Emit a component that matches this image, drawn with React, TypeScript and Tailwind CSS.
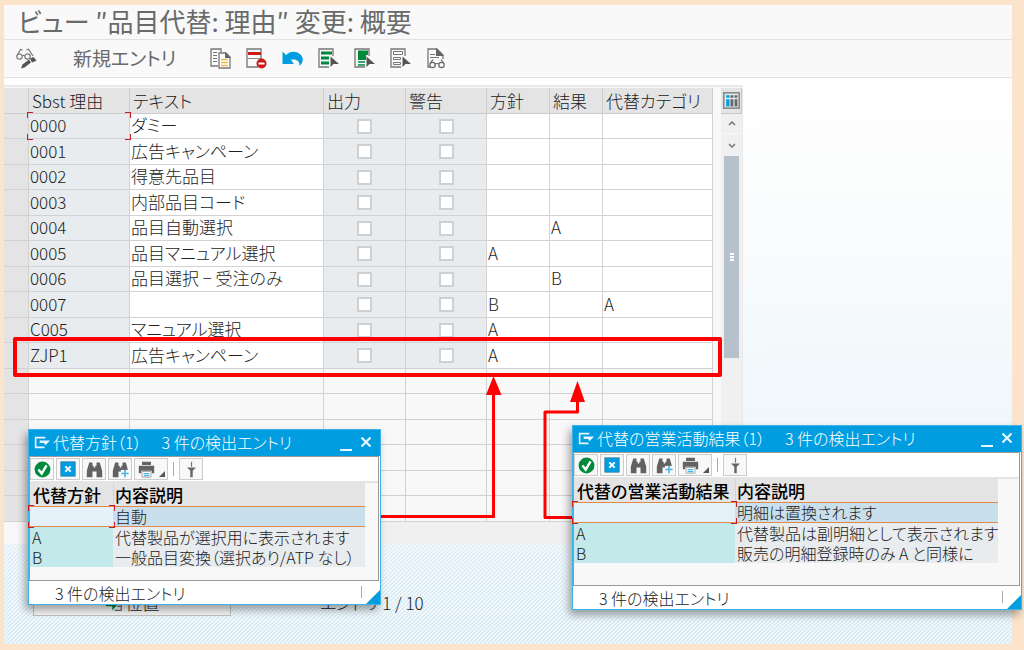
import React from 'react';

type EntryRow = {
  code: string;
  text: string;
  strategy?: string;
  result?: string;
  category?: string;
};

type HitRow = [string, string];

const entries: EntryRow[] = [
  { code: '0000', text: 'ダミー' },
  { code: '0001', text: '広告キャンペーン' },
  { code: '0002', text: '得意先品目' },
  { code: '0003', text: '内部品目コード' },
  { code: '0004', text: '品目自動選択', result: 'A' },
  { code: '0005', text: '品目マニュアル選択', strategy: 'A' },
  { code: '0006', text: '品目選択 − 受注のみ', result: 'B' },
  { code: '0007', text: '', strategy: 'B', category: 'A' },
  { code: 'C005', text: 'マニュアル選択', strategy: 'A' },
  { code: 'ZJP1', text: '広告キャンペーン', strategy: 'A' },
];

const emptyRows = [0, 1, 2, 3, 4, 5];

const strategyHits: HitRow[] = [
  ['', '自動'],
  ['A', '代替製品が選択用に表示されます'],
  ['B', '一般品目変換（選択あり/ATP なし）'],
];

const resultHits: HitRow[] = [
  ['', '明細は置換されます'],
  ['A', '代替製品は副明細として表示されます'],
  ['B', '販売の明細登録時のみ A と同様に'],
];

const Svg: React.FunctionComponent<{ children: React.ReactNode; className?: string }> = ({
  children,
  className = 'h-[21px] w-[21px]',
}) => (
  <svg viewBox="0 0 21 21" fill="none" className={className} aria-hidden="true">
    {children}
  </svg>
);

const DisplayChangeIcon = () => (
  <Svg>
    <g stroke="#777" strokeWidth="1.2">
      <circle cx="3.5" cy="8.5" r="2.7" />
      <circle cx="11.5" cy="8.5" r="2.7" />
      <path d="M6.300 7.800q1.200-1 2.400 0M1 7.500 4.500 1.500l2 .6M10.500 2l2-.8L17 8" />
    </g>
    <path d="M5 20.500l1.500-4L13 11.500l2 3L8.500 19.500z" fill="#555" />
    <path d="M14 10.500l3.500-1.500 3 3.500-3 1.500-1.500.500z" fill="#555" />
  </Svg>
);

const CopyIcon = () => (
  <Svg>
    <path d="M8 18H1V1h10v3" stroke="#777" strokeWidth="1.300" />
    <path d="M3 4.500h4M3 7.500h4M3 10.500h4M3 13.500h4" stroke="#777" />
    <path d="M9 5h7l4 4v11H9z" fill="#fff" stroke="#777" strokeWidth="1.300" />
    <path d="M15 4v6h6z" fill="#666" />
    <path d="M11 11.500h7M11 14.500h7M11 17.500h7" stroke="#f0b840" strokeWidth="1.600" />
  </Svg>
);

const DeleteIcon = () => (
  <Svg>
    <path d="M15 11V1H1v18h11" stroke="#777" strokeWidth="1.300" />
    <path d="M1 10.500h14" stroke="#888" />
    <path d="M2 5.500h13" stroke="#cc1919" strokeWidth="3" />
    <circle cx="15.500" cy="15.500" r="5" fill="#cc1919" />
    <path d="M12.500 15.500h6" stroke="#fff" strokeWidth="2" />
  </Svg>
);

const UndoIcon = () => (
  <Svg>
    <path
      d="M.5 3.500L4 7C8 2.500 15 2.500 19 7c3 4 2 7.500-1.500 11 .500-4.500-3-7.500-8.500-6l3 4H.5z"
      fill="#009de0"
    />
  </Svg>
);

const Cursor = () => <path d="M12.500 8.500v10.500l3-3h5.500z" fill="#555" />;

const SelectAllIcon = () => (
  <Svg>
    <path d="M15 8V1H1v18h10" stroke="#777" strokeWidth="1.300" />
    <path d="M3 5h11M3 10h8M3 15h8" stroke="#00883a" strokeWidth="3" />
    <Cursor />
  </Svg>
);

const SelectBlockIcon = () => (
  <Svg>
    <path d="M15 8V1H1v18h10" stroke="#777" strokeWidth="1.300" />
    <path d="M4 2.500h10V7h-2v5H4z" fill="#00883a" />
    <path d="M4 14h7M4 17h7" stroke="#00883a" strokeWidth="1.300" />
    <Cursor />
  </Svg>
);

const DeselectIcon = () => (
  <Svg>
    <path d="M15 8V1H1v18h10" stroke="#777" strokeWidth="1.300" />
    <path d="M3.500 3.500h9v3h-9zM3.500 9.500h7v2h-7zM3.500 14.500h7v2h-7z" stroke="#777" />
    <Cursor />
  </Svg>
);

const DetailIcon = () => (
  <Svg>
    <path d="M4 19H2V1h9l6 6v4" stroke="#777" strokeWidth="1.300" />
    <path d="M10 0v8h8z" fill="#666" />
    <path d="M4 6.500h5M4 9.500h9" stroke="#777" />
    <g stroke="#666" strokeWidth="1.200">
      <circle cx="6.500" cy="17" r="2.700" />
      <circle cx="15.500" cy="17" r="2.700" />
      <path d="M9 16q2-1 4 0M4.500 15l2.500-3.500M17.500 15 15 11.500" />
    </g>
  </Svg>
);

const ColumnsIcon = () => (
  <Svg className="h-[17px] w-[17px]">
    <rect x="1" y="1" width="19" height="19" fill="#dfe9f0" stroke="#8a8a8a" strokeWidth="2" />
    <path d="M6 4v3M6 9v9" stroke="#009de0" strokeWidth="4" />
    <path d="M11 4v3M11 9v9M16 4v3M16 9v9" stroke="#666" strokeWidth="3.500" />
  </Svg>
);

const CheckIcon = () => (
  <Svg className="h-[17px] w-[17px]">
    <circle cx="10.500" cy="10.500" r="9.800" fill="#008a3b" />
    <path d="M5.500 10.500l4 5 6-10" stroke="#fff" strokeWidth="3" />
  </Svg>
);

const CancelIcon = () => (
  <Svg className="h-4 w-4">
    <path d="M1 1h19v19H1z" fill="#009de0" stroke="#3a7fa3" />
    <path d="M7 7l7 7M14 7l-7 7" stroke="#fff" strokeWidth="2.600" />
  </Svg>
);

const Binoculars = () => (
  <path d="M4 2h4v4h1.500v2h2V6H13V2h4l3 10v8h-7v-7H8v7H1v-8z" fill="#626262" />
);

const FindIcon = () => (
  <Svg className="h-[17px] w-[17px]">
    <Binoculars />
  </Svg>
);

const FindNextIcon = () => (
  <Svg className="h-[17px] w-[17px]">
    <Binoculars />
    <path d="M11 11h10v10H11z" fill="#f8f8f8" />
    <path d="M16 11v9M11.500 15.500h9" stroke="#46b4e6" strokeWidth="2" />
  </Svg>
);

const PrintIcon = () => (
  <Svg className="h-[17px] w-[17px]">
    <path d="M5 1h11v4H5zM1 6h19v9h-3v-3H4v3H1z" fill="#626262" />
    <path d="M5 13h11v7H5z" fill="#fff" stroke="#999" />
    <path d="M7 15.500h7M7 18h7" stroke="#46b4e6" strokeWidth="1.500" />
  </Svg>
);

const FilterIcon = () => (
  <Svg className="h-[17px] w-[17px]">
    <path d="M10.500 1v6" stroke="#777" strokeWidth="1.500" />
    <path d="M5 8h11l-4 4v8H9v-8z" fill="#666" />
  </Svg>
);

const ExitIcon = () => (
  <Svg className="h-[17px] w-[17px]">
    <path d="M14 4.500H2v12h11" stroke="#e8f6fd" strokeWidth="2" />
    <path d="M7 8h13l-6 6-1.500-3H7z" fill="#e8f6fd" />
  </Svg>
);

const PositionIcon = () => (
  <Svg className="h-[17px] w-[17px]">
    <path d="M1 10h8V5l6 7-6 7v-5H1z" fill="#00883a" />
    <path d="M13 2h7v17h-8M15 6h4M16 10h3M15 14h4" stroke="#666" strokeWidth="1.500" />
  </Svg>
);

const tools = [
  { label: 'コピー', Icon: CopyIcon },
  { label: '削除', Icon: DeleteIcon },
  { label: '元に戻す', Icon: UndoIcon },
  { label: '全選択', Icon: SelectAllIcon },
  { label: 'ブロック選択', Icon: SelectBlockIcon },
  { label: '全選択解除', Icon: DeselectIcon },
  { label: '詳細', Icon: DetailIcon },
];

// Red corner marks around the focused cell
const FocusCorners = () => (
  <span className="pointer-events-none absolute -inset-x-0.5 -inset-y-0.5 z-10">
    <span className="absolute left-0 top-0 h-1.5 w-1.5 border-l border-t border-[#c02020]" />
    <span className="absolute right-0 top-0 h-1.5 w-1.5 border-r border-t border-[#c02020]" />
    <span className="absolute bottom-0 left-0 h-1.5 w-1.5 border-b border-l border-[#c02020]" />
    <span className="absolute bottom-0 right-0 h-1.5 w-1.5 border-b border-r border-[#c02020]" />
  </span>
);

const HeadCell: React.FunctionComponent<{ children?: React.ReactNode }> = ({ children }) => (
  <th className="border-b border-r border-[#cdcdcd] bg-[#e4e4e4] p-0 pl-[3px] text-left font-light text-[#222]">
    {children}
  </th>
);

const cell = 'relative border-b border-r border-[#d2d2d2] p-0 pb-0.5 pl-px ';

const FlagCell: React.FunctionComponent<{ label: string }> = ({ label }) => (
  <td className="border-b border-r border-[#d2d2d2] bg-[#e8ecef] p-0">
    <input
      type="checkbox"
      disabled
      aria-label={label}
      className="mx-auto block h-[15px] w-[15px] appearance-none border-2 border-[#d0d0d0] bg-white"
    />
  </td>
);

const EntryTable = () => (
  <table className="w-[709px] table-fixed border-separate border-spacing-0 whitespace-nowrap text-[17px] leading-5 text-[#222]">
    <colgroup>
      <col className="w-[25px]" />
      <col className="w-[101px]" />
      <col className="w-[194px]" />
      <col className="w-[82px]" />
      <col className="w-[81px]" />
      <col className="w-[63px]" />
      <col className="w-[53px]" />
      <col className="w-[110px]" />
    </colgroup>
    <thead>
      <tr className="h-[26px]">
        <HeadCell />
        <HeadCell>Sbst 理由</HeadCell>
        <HeadCell>テキスト</HeadCell>
        <HeadCell>出力</HeadCell>
        <HeadCell>警告</HeadCell>
        <HeadCell>方針</HeadCell>
        <HeadCell>結果</HeadCell>
        <HeadCell>代替カテゴリ</HeadCell>
      </tr>
    </thead>
    <tbody>
      {entries.map((e, i) => (
        <tr key={e.code} className="h-[25px] even:h-[26px]">
          <td className={cell + 'bg-[#e4e4e4]'} />
          <td className={cell + 'bg-[#e8ecef]'}>
            {e.code}
            {i === 0 && <FocusCorners />}
          </td>
          <td className={cell + 'bg-white'}>{e.text}</td>
          <FlagCell label={`出力 ${e.code}`} />
          <FlagCell label={`警告 ${e.code}`} />
          <td className={cell + 'bg-white'}>{e.strategy}</td>
          <td className={cell + 'bg-white'}>{e.result}</td>
          <td className={cell + 'bg-white'}>{e.category}</td>
        </tr>
      ))}
      {emptyRows.map(r => (
        <tr key={r} className="h-[25px] even:h-[26px]">
          <td className={cell + 'bg-[#e4e4e4]'} />
          <td className={cell} />
          <td className={cell} />
          <td className={cell} />
          <td className={cell} />
          <td className={cell} />
          <td className={cell} />
          <td className={cell} />
        </tr>
      ))}
    </tbody>
  </table>
);

const ScrollColumn = () => (
  <div className="flex w-[21px] flex-col items-center bg-[#f0f0f0]">
    <button
      type="button"
      aria-label="表の設定"
      className="flex h-[26px] w-full items-center justify-center border-b border-r border-[#c8c8c8] bg-[#e4e4e4]"
    >
      <ColumnsIcon />
    </button>
    <button type="button" aria-label="上へ" className="flex h-5 w-full items-center justify-center border-b border-[#f8f8f8]">
      <svg viewBox="0 0 8 5" fill="none" className="h-[5px] w-2">
        <path d="M1 4l3-3 3 3" stroke="#777" strokeWidth="1.500" />
      </svg>
    </button>
    <button type="button" aria-label="下へ" className="flex h-[22px] w-full items-center justify-center">
      <svg viewBox="0 0 8 5" fill="none" className="h-[5px] w-2">
        <path d="M1 1l3 3 3-3" stroke="#777" strokeWidth="1.500" />
      </svg>
    </button>
    <div className="flex h-[202px] w-[15px] flex-col items-center justify-center gap-px bg-[#b7c1cb]">
      <span className="h-0.5 w-1 bg-white" />
      <span className="h-0.5 w-1 bg-white" />
      <span className="h-0.5 w-1 bg-white" />
    </div>
  </div>
);

const ToolButton: React.FunctionComponent<{ label: string; children: React.ReactNode }> = ({
  label,
  children,
}) => (
  <button
    type="button"
    aria-label={label}
    className="flex h-[22px] w-6 items-center justify-center border border-[#cccccc] bg-[#f8f8f8]"
  >
    {children}
  </button>
);

type HitListProps = {
  title: string;
  keyHeader: string;
  keyColumn: string;
  tableWidth: string;
  bodyHeight: string;
  className: string;
  rows: HitRow[];
};

const HitListWindow: React.FunctionComponent<HitListProps> = ({
  title,
  keyHeader,
  keyColumn,
  tableWidth,
  bodyHeight,
  className,
  rows,
}) => (
  <section
    aria-label={title}
    className={
      'absolute whitespace-nowrap border border-[#3fb3e8] bg-white text-[16px] text-[#222] shadow-[-3px_5px_8px_rgba(0,0,0,0.35)] ' +
      className
    }
  >
    <header className="flex h-[26px] items-center bg-[#009de0] pb-0.5 pl-[5px] pr-2 text-white">
      <ExitIcon />
      <h2 className="ml-0.5 flex-1 leading-6">
        {title}
        <span className="ml-5">3 件の検出エントリ</span>
      </h2>
      <button type="button" aria-label="最小化" className="mr-2 h-[18px] w-3 border-b-2 border-[#e8f6fd]" />
      <button type="button" aria-label="閉じる">
        <svg viewBox="0 0 12 12" className="h-3 w-3">
          <path d="M1.500 1.500l9 9M10.500 1.500l-9 9" stroke="#e8f6fd" strokeWidth="2.200" />
        </svg>
      </button>
    </header>
    <div className={'mr-px border border-[#999] bg-[#f8f8f8] ' + bodyHeight}>
      <div className="flex h-[26px] items-center gap-0.5 border-b-2 border-[#e4e4e4] bg-white">
        <ToolButton label="確定">
          <CheckIcon />
        </ToolButton>
        <ToolButton label="取消">
          <CancelIcon />
        </ToolButton>
        <ToolButton label="検索">
          <FindIcon />
        </ToolButton>
        <ToolButton label="次を検索">
          <FindNextIcon />
        </ToolButton>
        <button
          type="button"
          aria-label="印刷"
          className="flex h-[22px] w-[34px] items-center border border-[#cccccc] bg-[#f8f8f8] pl-[3px]"
        >
          <PrintIcon />
          <svg viewBox="0 0 6 6" className="ml-1 mt-2.5 h-1.5 w-1.5">
            <path d="M6 0v6H0z" fill="#555" />
          </svg>
        </button>
        <span className="mx-[3px] h-[14px] w-px bg-[#aaa]" />
        <ToolButton label="フィルタ">
          <FilterIcon />
        </ToolButton>
      </div>
      <table className={'table-fixed border-separate border-spacing-0 leading-5 ' + tableWidth}>
        <colgroup>
          <col className={keyColumn} />
          <col />
        </colgroup>
        <thead>
          <tr className="h-[23px] bg-[#e4e4e4] text-[17px] text-black">
            <th className="p-0 pl-[3px] text-left font-medium">{keyHeader}</th>
            <th className="border-l border-[#d4d4d4] p-0 pl-px text-left font-medium">内容説明</th>
          </tr>
        </thead>
        <tbody>
          {rows.map(([key, text], i) =>
            i === 0 ? (
              <tr key={text} className="h-[21px]">
                <td className="relative border-y border-[#dd8a4c] bg-[#e5f1f9] p-0">
                  <FocusCorners />
                </td>
                <td className="border-y border-[#dd8a4c] bg-[#c9dfec] p-0 pl-0.5 leading-[19px]">{text}</td>
              </tr>
            ) : (
              <tr key={text} className="h-5">
                <td className="bg-[#c3e9eb] p-0 pl-0.5">{key}</td>
                <td className="bg-[#e8ecef] p-0 pl-0.5">{text}</td>
              </tr>
            ),
          )}
        </tbody>
      </table>
    </div>
    <footer className="flex h-[23px] items-center justify-between pl-[26px]">
      <span className="leading-5">3 件の検出エントリ</span>
      <span className="flex items-end gap-1 self-end">
        <span className="mb-1.5 h-3 w-px bg-[#aaa]" />
        <svg viewBox="0 0 14 14" className="h-[14px] w-[14px]">
          <path d="M14 0v14H0z" fill="#009de0" />
        </svg>
      </span>
    </footer>
  </section>
);

const Arrows = () => (
  <svg className="pointer-events-none absolute left-0 top-0 h-[650px] w-[1024px]" fill="none" aria-hidden="true">
    <g stroke="#f00" strokeWidth="3">
      <path d="M378 516.500h115.500V392" />
      <path d="M574 517.500h-29V412h32.500V400" strokeLinejoin="round" />
    </g>
    <path d="M493.500 376l8 19h-15.500zM577.500 381l7.500 21h-15z" fill="#f00" />
  </svg>
);

export default function App() {
  return (
    <div className="relative flex min-h-screen flex-col overflow-hidden bg-[#fce4cc] pb-1.5 pl-1 pr-3 pt-[5px] font-light text-[#222] [font-family:'Noto_Sans_CJK_JP',sans-serif] [font-feature-settings:'palt']">
      <h1 className="flex h-[35px] items-center whitespace-nowrap border-b border-[#e2e2e2] bg-[#f9f9f9] pb-1 pl-[14px] text-[26px] font-normal text-[#6a6a6a]">
        ビュー ″品目代替: 理由″ 変更: 概要
      </h1>
      <nav className="flex h-[38px] items-center border-b border-[#e2e2e2] bg-[#f9f9f9] pl-3">
        <button type="button" aria-label="照会 / 変更">
          <DisplayChangeIcon />
        </button>
        <button type="button" className="ml-9 w-[104px] whitespace-nowrap text-left text-[19px] font-normal text-[#6a6a6a]">
          新規エントリ
        </button>
        <div className="ml-[33px] flex gap-[15px]">
          {tools.map(({ label, Icon }) => (
            <button key={label} type="button" aria-label={label}>
              <Icon />
            </button>
          ))}
        </div>
      </nav>
      <main className="flex-1 bg-[linear-gradient(to_bottom,#ffffff_0%,#ffffffcc_25%,#ffffff00_100%),linear-gradient(135deg,#d9ebf4_0%,#d9ebf4_25%,#f1f8fb_25%,#f1f8fb_50%,#d9ebf4_50%,#d9ebf4_75%,#f1f8fb_75%,#f1f8fb_100%)] [background-size:100%_100%,4px_4px] pt-[7px]">
        <div className="w-[739px] border-r border-t-2 border-[#e9e9e9] bg-[#f8f8f8] pt-px">
          <div className="flex justify-between">
            <EntryTable />
            <ScrollColumn />
          </div>
          <div className="flex h-[22px]">
            <div className="w-[100px]" />
            <div className="flex-1 bg-[#f0f0f0]" />
          </div>
        </div>
        <div className="flex items-center pl-[29px] pt-[46px] text-[17px] leading-6">
          <button
            type="button"
            className="flex h-[26px] w-[198px] items-center justify-center gap-1 border border-[#c0c0c0] bg-[#f5f5f5]"
          >
            <PositionIcon />
            位置
          </button>
          <span className="ml-[89px]">エントリ 1 / 10</span>
        </div>
      </main>

      <div className="pointer-events-none absolute left-[13px] top-[337px] h-10 w-[709px] rounded-[2px] border-4 border-[#f00]" />
      <Arrows />
      <HitListWindow
        title="代替方針（1）"
        keyHeader="代替方針"
        keyColumn="w-[83px]"
        tableWidth="w-[335px]"
        bodyHeight="h-[125px]"
        className="left-[28px] top-[429px] w-[353px]"
        rows={strategyHits}
      />
      <HitListWindow
        title="代替の営業活動結果（1）"
        keyHeader="代替の営業活動結果"
        keyColumn="w-[161px]"
        tableWidth="w-[424px]"
        bodyHeight="h-[134px]"
        className="left-[572px] top-[425px] w-[450px]"
        rows={resultHits}
      />
    </div>
  );
}
